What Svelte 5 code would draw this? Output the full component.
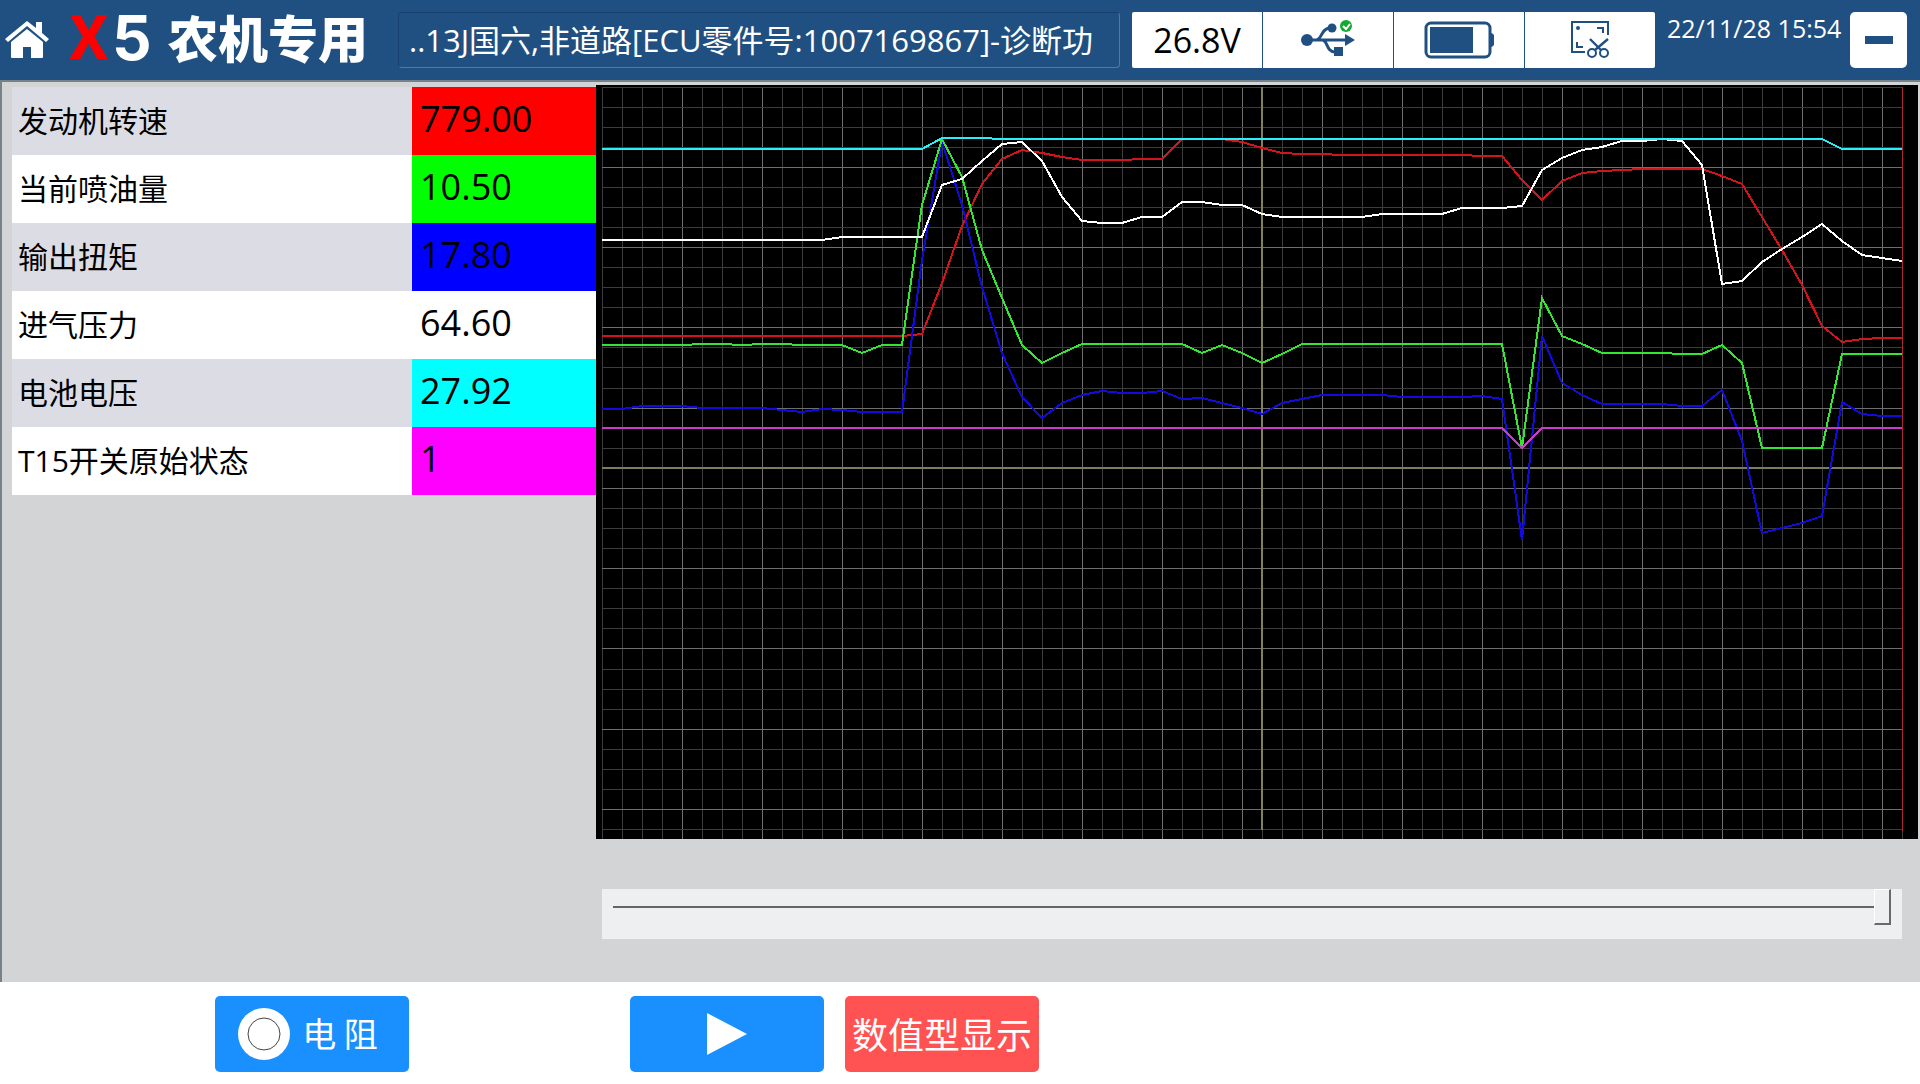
<script lang="ts">
  interface Channel {
    name: string;
    value: string;
    color: string;
  }

  interface Trace {
    color: string;
    points: number[];
  }

  const channels: Channel[] = [
    { name: '发动机转速', value: '779.00', color: '#ff0000' },
    { name: '当前喷油量', value: '10.50', color: '#00ff00' },
    { name: '输出扭矩', value: '17.80', color: '#0000ff' },
    { name: '进气压力', value: '64.60', color: '#ffffff' },
    { name: '电池电压', value: '27.92', color: '#00ffff' },
    { name: 'T15开关原始状态', value: '1', color: '#ff00ff' },
  ];

  const rep = (value: number, count: number): number[] => Array(count).fill(value);

  // one sample per grid column, measured down from the top of the plot
  const traces: Trace[] = [
    {
      color: '#d2141e',
      points: [
        ...rep(251, 16), 249, 198, 141, 99, 74, 65, 68, 72, 75, 75, 75, 74, 74, 54, 54, 54, 57, 63,
        68, 69, 69, ...rep(70, 7), 71, 71, 95, 115, 96, 88, 86, 85, 84, 84, 84, 84, 91, 99, 132, 165,
        200, 241, 257, 254, 253, 253,
      ],
    },
    {
      color: '#140adc',
      points: [
        324, 324, 321, 321, 321, 323, 323, 323, 323, 325, 327, 324, 325, 327, 327, 327, 175, 57, 120,
        202, 268, 312, 333, 318, 310, 306, 308, 308, 306, 314, 313, 318, 323, 329, 318, 314, 310,
        310, 310, 310, 312, 312, 312, 312, 311, 314, 455, 251, 298, 310, 319, 319, 319, 319, 321,
        321, 305, 356, 448, 443, 438, 431, 317, 329, 331, 331,
      ],
    },
    {
      color: '#32e632',
      points: [
        ...rep(260, 5), 259, 259, 260, 259, 259, 260, 260, 260, 268, 260, 260, 120, 54, 92, 165, 213,
        260, 278, 268, ...rep(259, 6), 268, 260, 268, 278, 269, ...rep(259, 11), 363, 213, 251, 259,
        268, 268, 268, 268, 269, 269, 260, 278, 363, 363, 363, 363, 269, 269, 269, 269,
      ],
    },
    {
      color: '#ffffff',
      points: [
        ...rep(155, 12), ...rep(152, 5), 100, 94, 76, 59, 57, 76, 112, 136, 138, 138, 132, 132, 117,
        117, 120, 120, 129, ...rep(132, 5), ...rep(129, 4), 123, 123, 123, 121, 85, 73, 65, 62, 56,
        56, 54, 56, 80, 199, 196, 177, 164, 152, 139, 156, 170, 173, 176,
      ],
    },
    { color: '#28f0fa', points: [...rep(64, 17), 53, 53, 53, ...rep(54, 42), ...rep(64, 4)] },
    { color: '#c83cc8', points: [...rep(343, 46), 363, ...rep(343, 19)] },
  ];

  const toPath = (points: number[]): string =>
    points.map((y, i) => `${i === 0 ? 'M' : 'L'}${6 + i * 20} ${y}`).join(' ');

  const columns = Array.from({ length: 66 }, (_, i) => ({ x: 6 + i * 20, major: i % 4 === 0 && i > 0 }));
  const rows = Array.from({ length: 38 }, (_, i) => ({
    y: 2 + Math.floor(i * 20.07),
    major: i % 4 === 0 && i > 0,
  }));

  let position = $state(100);
</script>

<div class="screen">
  <header class="topbar">
    <a class="home" href="#home" aria-label="主页">
      <svg width="44" height="38" viewBox="0 0 44 38" fill="#fff">
        <path d="M22 0 0 18l3 3L22 5l19 16 3-3-7-6V1h-6v6z" />
        <path d="M22 8 6 21v15q0 1 1 1h11V26h8v11h11q1 0 1-1V21z" />
      </svg>
    </a>
    <div class="brand">
      <span class="model x">X</span>
      <span class="model five">5</span>
      <span class="edition">农机专用</span>
    </div>
    <div class="title">..13J国六,非道路[ECU零件号:1007169867]-诊断功</div>
    <div class="status">
      <span class="cell">26.8V</span>
      <button class="cell" type="button" aria-label="USB">
        <svg width="56" height="40" viewBox="0 0 56 40" fill="#205081">
          <circle cx="7" cy="20" r="6" />
          <path d="M45 14l10 6-10 6z" />
          <circle cx="32" cy="8" r="4.5" />
          <rect x="34" y="27" width="9" height="9" />
          <path
            d="M7 20H46M16 20C22 20 21 8 30 8M22 20C28 20 26 32 35 32"
            fill="none"
            stroke="#205081"
            stroke-width="3"
          />
          <circle cx="46" cy="6" r="6" fill="#14aa32" />
          <path d="M43 6l3 3 4-5" fill="none" stroke="#fff" stroke-width="2" />
        </svg>
      </button>
      <button class="cell" type="button" aria-label="电池">
        <svg width="70" height="38" viewBox="0 0 70 38">
          <rect x="2" y="2" width="64" height="34" rx="5" fill="#fff" stroke="#205081" stroke-width="3" />
          <rect x="6" y="6" width="43" height="26" fill="#205081" />
          <path d="M66 12q4 0 4 3v8q0 3-4 3z" fill="#205081" />
        </svg>
      </button>
      <button class="cell" type="button" aria-label="截图">
        <svg width="38" height="38" viewBox="0 0 38 38" fill="none" stroke="#205081" stroke-width="2">
          <path d="M37 14V1H1v30h13M26 7h6v5M6 21v5h6" />
          <circle cx="7" cy="7" r="1" />
          <path d="M19 18l11 11M37 18 24 29" stroke-width="2.4" />
          <circle cx="21" cy="32" r="4" />
          <circle cx="33" cy="32" r="4" />
        </svg>
      </button>
    </div>
    <time class="clock">22/11/28 15:54</time>
    <button class="minimize" type="button" aria-label="最小化"><span class="dash"></span></button>
  </header>

  <main class="workspace">
    <table class="channels">
      <tbody>
        {#each channels as channel}
          <tr>
            <th scope="row">{channel.name}</th>
            <td style:background={channel.color}>{channel.value}</td>
          </tr>
        {/each}
      </tbody>
    </table>

    <div class="monitor">
      <svg class="plot" viewBox="0 0 1322 754" preserveAspectRatio="none" role="img" aria-label="波形">
        <rect width="1322" height="754" fill="#000" />
        <g shape-rendering="crispEdges">
          {#each columns as { x, major }}
            <rect {x} y="2" width="1" height="752" fill={major ? '#6e6e6e' : '#3c3c3c'} />
          {/each}
          {#each rows as { y, major }}
            <rect x="6" {y} width="1301" height="1" fill={major ? '#6e6e6e' : '#3c3c3c'} />
          {/each}
          <rect x="665" y="2" width="2" height="743" fill="#82825a" />
          <rect x="6" y="382" width="1301" height="2" fill="#7d7d5a" />
          <rect x="1306" y="2" width="1" height="744" fill="#aa2832" />
          {#each traces as trace}
            <path d={toPath(trace.points)} fill="none" stroke={trace.color} stroke-width="2" />
          {/each}
        </g>
      </svg>

      <input class="scrubber" type="range" min="0" max="100" bind:value={position} aria-label="回放位置" />
    </div>
  </main>

  <footer class="actions">
    <button class="action resistance" type="button">
      <svg width="52" height="52" viewBox="0 0 52 52">
        <circle cx="26" cy="26" r="26" fill="#fff" />
        <circle cx="26" cy="26" r="16" fill="none" stroke="#444" />
      </svg>
      <span>电 阻</span>
    </button>
    <button class="action play" type="button" aria-label="播放">
      <svg width="40" height="42" viewBox="0 0 40 42"><path d="M0 0 40 21 0 42z" fill="#fff" /></svg>
    </button>
    <button class="action numeric" type="button"><span>数值型显示</span></button>
  </footer>
</div>

<style>
  :global(body) {
    margin: 0;
  }

  .screen {
    display: flex;
    flex-direction: column;
    min-height: 100vh;
    background: #fff;
    color: #000;
    font-family: 'Open Sans', 'Noto Sans CJK SC', sans-serif;
    font-size: 30px;
  }

  button {
    margin: 0;
    padding: 0;
    border: 0;
    font: inherit;
    cursor: pointer;
  }

  svg {
    display: block;
    flex: none;
  }

  .topbar {
    display: flex;
    align-items: center;
    box-sizing: border-box;
    height: 80px;
    padding: 0 13px 0 5px;
    background: #205081;
    color: #fff;
  }

  .brand {
    display: flex;
    align-items: center;
    width: 329px;
    margin-left: 20px;
    padding-bottom: 4px;
    line-height: 56px;
    white-space: nowrap;
  }

  .model {
    font-size: 62px;
    font-weight: 700;
  }

  .x {
    width: 43px;
    color: #f00;
    font-family: Roboto, sans-serif;
  }

  .five {
    width: 56px;
    font-family: Inter, sans-serif;
  }

  .edition {
    font-family: 'Noto Sans CJK SC', sans-serif;
    font-size: 50px;
    font-weight: 900;
    line-height: 52px;
    padding-bottom: 4px;
  }

  .title {
    box-sizing: border-box;
    flex: 1;
    min-width: 0;
    height: 56px;
    padding: 0 10px;
    overflow: hidden;
    border: 1px solid #17406e;
    border-right-color: #4a7aae;
    border-bottom-color: #4a7aae;
    border-radius: 4px;
    font-size: 31px;
    line-height: 54px;
    white-space: nowrap;
  }

  .status {
    display: flex;
    gap: 1px;
    margin-left: 12px;
    overflow: hidden;
    border-radius: 2px;
  }

  .cell {
    display: flex;
    align-items: center;
    justify-content: center;
    width: 130px;
    height: 56px;
    background: #fff;
    color: #000;
    font-size: 34px;
    line-height: 56px;
  }

  .clock {
    align-self: flex-start;
    width: 183px;
    margin-top: 12px;
    margin-left: 12px;
    font-size: 25px;
    line-height: 32px;
    white-space: nowrap;
  }

  .minimize {
    display: flex;
    align-items: center;
    justify-content: center;
    width: 57px;
    height: 56px;
    border-radius: 5px;
    background: #fff;
  }

  .dash {
    width: 28px;
    height: 8px;
    background: #205081;
  }

  .workspace {
    display: flex;
    flex: 1;
    align-items: flex-start;
    padding: 3px 2px 0 10px;
    border-top: 2px solid #75828a;
    border-left: 2px solid #75828a;
    background: #d2d4d6;
  }

  .channels {
    flex: none;
    width: 584px;
    margin-top: 2px;
    border-collapse: collapse;
    table-layout: fixed;
  }

  .channels tr {
    height: 68px;
    background: #fff;
  }

  .channels tr:nth-child(odd) {
    background: #dcdce4;
  }

  .channels th {
    box-sizing: border-box;
    width: 400px;
    padding: 0 6px 4px;
    font-weight: 400;
    text-align: left;
  }

  .channels td {
    padding: 0 8px 4px;
    font-size: 36px;
    line-height: 48px;
  }

  .monitor {
    flex: 1;
    min-width: 0;
  }

  .plot {
    width: 100%;
    height: 754px;
  }

  .scrubber {
    display: block;
    box-sizing: border-box;
    width: calc(100% - 22px);
    height: 50px;
    margin: 50px 16px 0 6px;
    padding: 0 11px 14px;
    background: #eeeff0;
    appearance: none;
  }

  .scrubber::-webkit-slider-runnable-track {
    height: 36px;
    background: linear-gradient(#646464, #646464) 0 17px / 100% 2px no-repeat;
  }

  .scrubber::-webkit-slider-thumb {
    box-sizing: border-box;
    width: 17px;
    height: 36px;
    border: 1px solid #fff;
    border-right: 2px solid #696969;
    border-bottom: 2px solid #696969;
    background: #eeeff0;
    appearance: none;
  }

  .actions {
    display: flex;
    gap: 21px;
    height: 76px;
    padding: 14px 215px 12px;
  }

  .action {
    display: flex;
    align-items: center;
    justify-content: center;
    gap: 12px;
    box-sizing: border-box;
    width: 194px;
    height: 76px;
    border-radius: 5px;
    background: #1a90ff;
    color: #fff;
    font-family: 'Noto Sans CJK SC', sans-serif;
    font-size: 36px;
    white-space: nowrap;
  }

  .action span {
    padding-bottom: 3px;
  }

  .resistance {
    padding-right: 8px;
    font-size: 34px;
  }

  .play {
    margin-left: 200px;
  }

  .numeric {
    background: #ff5252;
  }
</style>
